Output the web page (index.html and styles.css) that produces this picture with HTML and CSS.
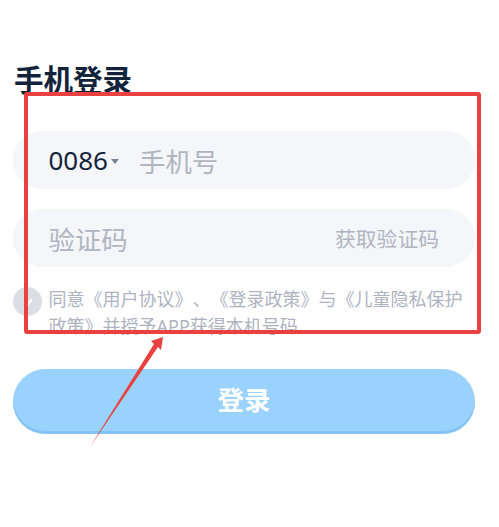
FILE: index.html
```html
<!DOCTYPE html>
<html lang="zh-CN">

<head>
    <meta charset="UTF-8">
    <title>手机登录</title>
    <link rel="stylesheet" href="styles.css">
</head>

<body>
    <div class="wrap">
        <h3>手机登录</h3>
        <div class="field first">
            <span class="code">0086</span>
            <span class="caret"></span>
            <span class="hint">手机号</span>
        </div>
        <div class="field">
            <span class="hint grow">验证码</span>
            <span class="getcode">获取验证码</span>
        </div>
        <div class="agree">
            <span class="check">
                <svg width="12" height="12" viewBox="0 0 14 14">
                    <path d="M2.5 7.2 L6 10.5 L11.5 3.8" fill="none" stroke="#fff" stroke-width="2.6" />
                </svg>
            </span>
            <p>同意《用户协议》、《登录政策》与《儿童隐私保护政策》并授予APP获得本机号码</p>
        </div>
        <div class="loginBtn">登录</div>
    </div>
    <!-- 红框和箭头 -->
    <div class="redBox"></div>
    <svg class="arrow" width="90" height="120" viewBox="0 0 90 120">
        <path d="M1 111 L65 8 L62 5 L74 1 L72 14 L69 11 Z" fill="#e8413f" />
    </svg>
</body>

</html>
```

FILE: styles.css
```css
* {
    padding: 0;
    margin: 0;
    box-sizing: border-box;
}

body {
    width: 499px;
    height: 527px;
    overflow: hidden;
    background: #fff;
    font-family: "Noto Sans", "Noto Sans CJK SC", sans-serif;
    text-spacing-trim: space-all;
}

.wrap {
    padding: 60px 24px 0 13px;
}

.wrap h3 {
    height: 40px;
    line-height: 40px;
    font-size: 29.5px;
    font-weight: 700;
    color: #14233c;
    margin-left: 1px;
}

.field {
    display: flex;
    align-items: center;
    height: 58px;
    margin-top: 20px;
    padding: 0 36px 0 35.5px;
    border-radius: 29px;
    background: #f4f6fa;
}

.field.first {
    margin-top: 31px;
}

.code {
    font-size: 26px;
    color: #14233c;
}

.caret {
    width: 0;
    height: 0;
    margin: 2px 20px 0 3px;
    border-top: 5px solid #7d8494;
    border-left: 4px solid transparent;
    border-right: 4px solid transparent;
}

.hint {
    font-size: 26.4px;
    color: #b0b5c1;
}

.grow {
    flex: 1;
}

.getcode {
    font-size: 20.8px;
    color: #b0b5c1;
}

.agree {
    display: flex;
    margin-top: 19px;
}

.check {
    flex: none;
    display: flex;
    align-items: center;
    justify-content: center;
    width: 29px;
    height: 29px;
    margin: 1px 6.5px 0 0;
    border-radius: 50%;
    background: #dcdee3;
}

.agree p {
    height: 52px;
    font-size: 18px;
    line-height: 27px;
    color: #aeb3bf;
}

.loginBtn {
    height: 65px;
    margin-top: 31px;
    line-height: 63px;
    border-radius: 33px;
    background: #9ad2fe;
    box-shadow: inset 0 -3px 0 #84c3f7;
    text-align: center;
    font-size: 26.5px;
    font-weight: 700;
    color: #fff;
}

.redBox {
    position: absolute;
    left: 24px;
    top: 92px;
    width: 457px;
    height: 242px;
    border: 4px solid #e8413f;
    border-radius: 3px;
}

.arrow {
    position: absolute;
    left: 89px;
    top: 336px;
}
```
